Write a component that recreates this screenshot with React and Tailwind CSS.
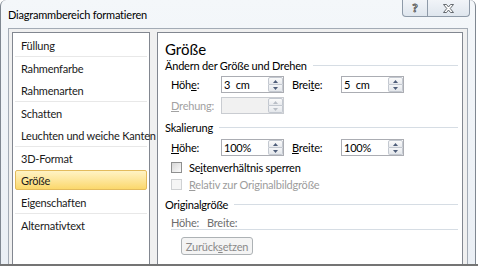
import React from "react";

const items = [
  { label: "Füllung" },
  { sep: true },
  { label: "Rahmenfarbe" },
  { label: "Rahmenarten" },
  { sep: true },
  { label: "Schatten" },
  { label: "Leuchten und weiche Kanten" },
  { sep: true },
  { label: "3D-Format" },
  { label: "Größe", selected: true },
  { label: "Eigenschaften" },
  { sep: true },
  { label: "Alternativtext" },
];

function Spinner({ disabled }) {
  const arrow = disabled ? "#b9bec6" : "#4e5d79";
  return (
    <div className="w-[15px] h-full flex flex-col">
      <div className="flex-1 flex items-center justify-center border border-[#c3c8d0] rounded-t-[2px] bg-gradient-to-b from-[#fafafa] to-[#e8eaee]">
        <svg width="5" height="3" viewBox="0 0 5 3">
          <polygon points="2.5,0 5,3 0,3" fill={arrow} />
        </svg>
      </div>
      <div className="flex-1 flex items-center justify-center border border-t-0 border-[#c3c8d0] rounded-b-[2px] bg-gradient-to-b from-[#f4f5f7] to-[#e4e7eb]">
        <svg width="5" height="3" viewBox="0 0 5 3">
          <polygon points="0,0 5,0 2.5,3" fill={arrow} />
        </svg>
      </div>
    </div>
  );
}

function SpinBox({ value, disabled }) {
  return (
    <div
      className={
        "w-[63px] h-full flex border " +
        (disabled ? "border-[#c9ccd1] bg-[#f1f1f1]" : "border-[#abadb3] bg-white")
      }
    >
      <div className="flex-1 pl-[2px] flex items-center text-black [word-spacing:3px]">{value}</div>
      <Spinner disabled={disabled} />
    </div>
  );
}

function Header({ children }) {
  return (
    <div className="h-[12px] flex items-center gap-[6px] pl-[7px]">
      <span className="whitespace-nowrap text-black">{children}</span>
      <div className="flex-1 h-px bg-[#d6dde4]" />
    </div>
  );
}

function CheckBox({ disabled }) {
  return (
    <div
      className={
        "w-[11px] h-[11px] border " +
        (disabled
          ? "border-[#cfd1d3] bg-[#f5f5f5]"
          : "border-[#8e8f8f] bg-gradient-to-br from-[#d6d6d6] to-[#fbfbfb]")
      }
    />
  );
}

const App = () => {
  return (
    <div className="w-[478px] h-[266px] bg-white overflow-hidden flex flex-col font-['Lato',sans-serif] text-[11px] tracking-[-0.2px] text-[#1a1a1a] leading-none">
      <div className="h-[264px] overflow-hidden">
        <div className="w-[476px] h-[290px] border-l border-r border-[#7f8791] rounded-tl-[6px] rounded-tr-[6px] bg-gradient-to-b from-[#f4f7fa] to-[#e9eef4] flex flex-col">
          {/* title bar */}
          <div className="h-[28px] flex items-start justify-between">
            <div className="h-[28px] pl-[7px] flex items-center text-[11px] text-black">
              Diagrammbereich formatieren
            </div>
            <div className="mr-[5px] h-[17px] flex border border-t-0 border-[#8e9aa8] rounded-b-[4px] overflow-hidden bg-gradient-to-b from-[#f1f4f8] to-[#dfe6ee]">
              <div className="w-[25px] h-full flex items-center justify-center border-r border-[#8e9aa8] text-[12px] font-bold text-white [-webkit-text-stroke:0.8px_#4a4a4a]">
                ?
              </div>
              <div className="w-[41px] h-full flex items-center justify-center">
                <svg width="11" height="9" viewBox="0 0 11 9">
                  <polygon
                    points="0.5,0.5 3.5,0.5 5.5,3 7.5,0.5 10.5,0.5 7.2,4.5 10.5,8.5 7.5,8.5 5.5,6 3.5,8.5 0.5,8.5 3.8,4.5"
                    fill="#ffffff"
                    stroke="#555a60"
                    strokeWidth="0.9"
                  />
                </svg>
              </div>
            </div>
          </div>

          {/* client area */}
          <div className="mx-[7px] flex-1 border border-[#a3abb5] bg-[#f0f0f0] pl-[3px] pt-[3px] pr-[4px] flex gap-[7px]">
            {/* category list */}
            <div className="w-[138px] border border-[#828790] bg-white pt-[1px] flex flex-col">
              {items.map((it, i) =>
                it.sep ? (
                  <div key={i} className="h-px mx-[2px] bg-[#e8e8e8]" />
                ) : (
                  <div key={i} className="h-[22px] px-[2px] py-[1px]">
                    <div
                      className={
                        "h-full flex items-center pl-[5px] rounded-[2px] border whitespace-nowrap " +
                        (it.selected
                          ? "border-[#e3bb5c] bg-gradient-to-b from-[#fff3c4] to-[#fbd86a]"
                          : "border-transparent")
                      }
                    >
                      {it.label}
                    </div>
                  </div>
                )
              )}
            </div>

            {/* settings panel */}
            <div className="w-[306px] border border-[#828790] bg-white pr-[4px] flex flex-col">
              <div className="mt-[6px] h-[20px] pl-[7px] flex items-center text-[15px] tracking-normal text-black">Größe</div>
              <Header>Ändern der Größe und Drehen</Header>

              <div className="mt-[5px] h-[17px] pl-[13px] flex items-center">
                <div className="w-[50px] text-black">
                  Höh<span className="underline">e</span>:
                </div>
                <SpinBox value="3 cm" />
                <div className="w-[49px] ml-[8px] text-black">
                  Brei<span className="underline">t</span>e:
                </div>
                <SpinBox value="5 cm" />
              </div>
              <div className="mt-[4px] h-[17px] pl-[13px] flex items-center">
                <div className="w-[50px] text-[#a2a2a2]">
                  <span className="underline">D</span>rehung:
                </div>
                <SpinBox value="" disabled />
              </div>

              <div className="mt-[7px]">
                <Header>Skalierung</Header>
              </div>
              <div className="mt-[6px] h-[17px] pl-[13px] flex items-center">
                <div className="w-[50px] text-black">
                  <span className="underline">H</span>öhe:
                </div>
                <SpinBox value="100%" />
                <div className="w-[49px] ml-[8px] text-black">
                  <span className="underline">B</span>reite:
                </div>
                <SpinBox value="100%" />
              </div>
              <div className="mt-[3px] h-[16px] pl-[13px] flex items-center gap-[7px]">
                <CheckBox />
                <span className="text-black">
                  Se<span className="underline">i</span>tenverhältnis sperren
                </span>
              </div>
              <div className="mt-[1px] h-[16px] pl-[13px] flex items-center gap-[7px]">
                <CheckBox disabled />
                <span className="text-[#9c9c9c]">
                  <span className="underline">R</span>elativ zur Originalbildgröße
                </span>
              </div>

              <div className="mt-[6px]">
                <Header>Originalgröße</Header>
              </div>
              <div className="mt-[6px] h-[12px] pl-[13px] flex items-center text-[#6d6d6d]">
                <span className="w-[36px]">Höhe:</span>
                <span>Breite:</span>
              </div>
              <div className="mt-[1px] ml-[13px] h-px bg-[#d6dde4]" />
              <div className="mt-[7px] pl-[23px]">
                <div className="w-[72px] h-[18px] flex items-center justify-center border border-[#adb2b5] rounded-[3px] bg-[#f4f4f4] text-[#8a8a8a]">
                  Zurück<span className="underline">s</span>etzen
                </div>
              </div>
            </div>
          </div>
        </div>
      </div>
      <div className="h-[2px] bg-[#747474]" />
    </div>
  );
};

export default App;
